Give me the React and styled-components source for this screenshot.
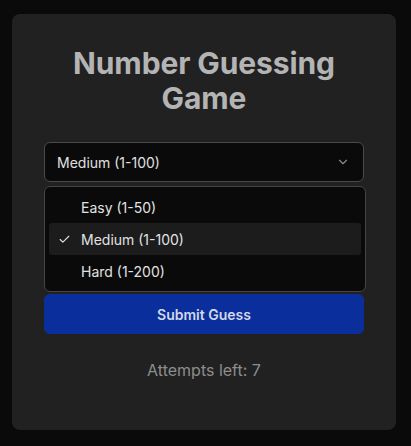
import React from 'react';
import styled, { createGlobalStyle } from 'styled-components';

const GlobalStyle = createGlobalStyle`
  body {
    margin: 0;
    background: #0a0a0a;
    font-family: Inter, "Noto Sans", sans-serif;
  }
`;

const Page = styled.main`
  padding: 14px 15px 16px 12px;
`;

const Card = styled.section`
  box-sizing: border-box;
  width: 384px;
  height: 416px;
  background: #212121;
  border-radius: 8px;
  padding: 32px;
  display: flex;
  flex-direction: column;
`;

const Title = styled.h1`
  margin: 0 0 26px;
  color: #b4b4b4;
  font-size: 30px;
  line-height: 35px;
  font-weight: 700;
  text-align: center;
  letter-spacing: -0.1px;
`;

const Trigger = styled.button`
  box-sizing: border-box;
  height: 40px;
  width: 100%;
  display: flex;
  align-items: center;
  justify-content: space-between;
  padding: 0 13px 0 12px;
  background: #0a0a0a;
  border: 1px solid #4a4a4a;
  border-radius: 6px;
  color: #e0e0e0;
  font-family: inherit;
  font-size: 14px;
`;

const Field = styled.div`
  position: relative;
  height: 112px;
`;

const Input = styled.input`
  box-sizing: border-box;
  width: 100%;
  height: 40px;
  margin-top: 16px;
  background: #0a0a0a;
  border: 1px solid #4a4a4a;
  border-radius: 6px;
`;

const Menu = styled.ul`
  position: absolute;
  top: 4px;
  left: 0;
  right: -2px;
  margin: 0;
  padding: 4px;
  list-style: none;
  background: #0a0a0a;
  border: 1px solid #454545;
  border-radius: 6px;
`;

const Item = styled.li`
  height: 32px;
  display: flex;
  align-items: center;
  padding-left: 32px;
  position: relative;
  border-radius: 3px;
  font-size: 14px;
  color: #e2e2e2;
  background: ${(p) => (p.$active ? '#1c1c1c' : 'transparent')};
`;

const Check = styled.svg`
  position: absolute;
  left: 9px;
  top: 10px;
`;

const Submit = styled.button`
  height: 40px;
  width: 100%;
  border: none;
  border-radius: 6px;
  background: #0a2f9c;
  color: #d4d8ea;
  font-family: inherit;
  font-size: 14px;
  font-weight: 600;
`;

const Attempts = styled.p`
  margin: 24px 0 0;
  text-align: center;
  color: #8d8d8d;
  font-size: 16px;
  line-height: 24px;
`;

const levels = [
  { label: 'Easy (1-50)' },
  { label: 'Medium (1-100)', active: true },
  { label: 'Hard (1-200)' },
];

export default function App() {
  return (
    <Page>
      <GlobalStyle />
      <Card>
        <Title>
          Number Guessing
          <br />
          Game
        </Title>
        <Trigger>
          <span>Medium (1-100)</span>
          <svg width="14" height="14" viewBox="0 0 24 24" fill="none" stroke="#8a8a8a" strokeWidth="2" strokeLinecap="round" strokeLinejoin="round">
            <path d="m6 9 6 6 6-6" />
          </svg>
        </Trigger>
        <Field>
          <Input type="number" />
          <Menu>
            {levels.map((l) => (
              <Item key={l.label} $active={l.active}>
                {l.active && (
                  <Check width="13" height="13" viewBox="0 0 24 24" fill="none" stroke="#e2e2e2" strokeWidth="2" strokeLinecap="round" strokeLinejoin="round">
                    <path d="M20 6 9 17l-5-5" />
                  </Check>
                )}
                {l.label}
              </Item>
            ))}
          </Menu>
        </Field>
        <Submit>Submit Guess</Submit>
        <Attempts>Attempts left: 7</Attempts>
      </Card>
    </Page>
  );
}
